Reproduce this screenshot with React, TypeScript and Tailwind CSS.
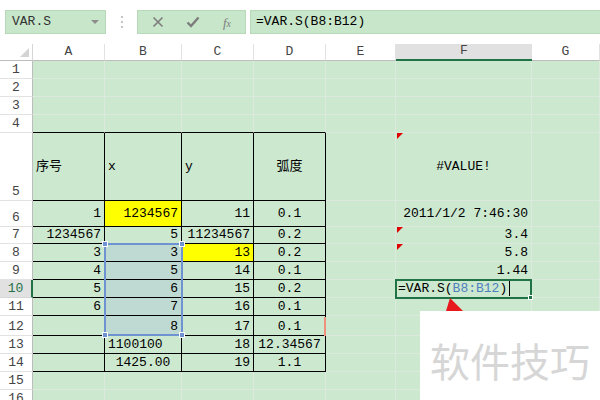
import type { ReactNode } from 'react'

type Align = 'l' | 'c' | 'r'
interface Cell {
  t: ReactNode
  a?: Align
  bg?: string
}

const COLS = ['A', 'B', 'C', 'D', 'E', 'F', 'G']
const ROWS = Array.from({ length: 16 }, (_, i) => i + 1)

const yellow = 'bg-[#ffff00]'
const sel = 'bg-[#bfdad2]'

const DATA: Record<string, Cell> = {
  A5: { t: '序号', a: 'l' },
  B5: { t: 'x', a: 'l' },
  C5: { t: 'y', a: 'l' },
  D5: { t: '弧度', a: 'c' },
  F5: { t: '#VALUE!', a: 'c' },
  A6: { t: '1' },
  B6: { t: '1234567', bg: yellow },
  C6: { t: '11' },
  D6: { t: '0.1', a: 'c' },
  F6: { t: '2011/1/2 7:46:30' },
  A7: { t: '1234567' },
  B7: { t: '5' },
  C7: { t: '11234567' },
  D7: { t: '0.2', a: 'c' },
  F7: { t: '3.4' },
  A8: { t: '3' },
  B8: { t: '3', bg: sel },
  C8: { t: '13', bg: yellow },
  D8: { t: '0.2', a: 'c' },
  F8: { t: '5.8' },
  A9: { t: '4' },
  B9: { t: '5', bg: sel },
  C9: { t: '14' },
  D9: { t: '0.1', a: 'c' },
  F9: { t: '1.44' },
  A10: { t: '5' },
  B10: { t: '6', bg: sel },
  C10: { t: '15' },
  D10: { t: '0.2', a: 'c' },
  A11: { t: '6' },
  B11: { t: '7', bg: sel },
  C11: { t: '16' },
  D11: { t: '0.1', a: 'c' },
  B12: { t: '8', bg: sel },
  C12: { t: '17' },
  D12: { t: '0.1', a: 'c' },
  B13: { t: '1100100', a: 'l' },
  C13: { t: '18' },
  D13: { t: '12.34567', a: 'c' },
  B14: { t: '1425.00', a: 'c' },
  C14: { t: '19' },
  D14: { t: '1.1', a: 'c' },
}

const alignCls = { l: 'justify-start', c: 'justify-center', r: 'justify-end' }

// SimSun-like look: monospace latin, CJK fallback
const mono = "[font-family:'Liberation_Mono','Noto_Sans_CJK_SC',monospace]"

const GridCell = ({ r, ci }: { r: number; ci: number }) => {
  const col = COLS[ci]
  const cell = DATA[`${col}${r}`]
  const inTable = ci <= 3
  const rightBlack = inTable && r >= 5 && r <= 14
  const bottomBlack = inTable && r >= 4 && r <= 14
  const vCenter = r === 5 || r === 6
  return (
    <div
      className={`flex overflow-visible whitespace-nowrap border-r border-b px-[3px] text-[13px] leading-[15px] text-black ${
        rightBlack ? 'border-r-black' : 'border-r-[#dbeadc]'
      } ${bottomBlack ? 'border-b-black' : 'border-b-[#dbeadc]'} ${vCenter ? 'items-center' : 'items-end pb-[1px]'} ${
        cell ? alignCls[cell.a ?? 'r'] : ''
      } ${cell?.bg ?? 'bg-[#cce8cf]'}`}
    >
      {cell?.t}
    </div>
  )
}

const CommentMark = ({ top }: { top: string }) => (
  <div className={`absolute left-[397px] ${top} h-0 w-0 border-t-[6px] border-r-[6px] border-t-[#e00000] border-r-transparent`} />
)

export default function App() {
  return (
    <div className={`h-[400px] w-[600px] overflow-hidden bg-white ${mono}`}>
      {/* toolbar */}
      <div className="flex h-[44px] items-start pt-[10px]">
        <div className="ml-[5px] flex h-[24px] w-[101px] items-center justify-between border border-[#b7d8b9] bg-[#c8e6c9] pl-[6px] pr-[6px] text-[13px] text-[#333]">
          <span>VAR.S</span>
          <svg width="8" height="5" viewBox="0 0 8 5">
            <path d="M0 0h8L4 4z" fill="#8c8c8c" />
          </svg>
        </div>
        <div className="flex h-[24px] w-[31px] flex-col items-center justify-center gap-[3px]">
          <span className="h-[2px] w-[2px] bg-[#c4c4c4]" />
          <span className="h-[2px] w-[2px] bg-[#c4c4c4]" />
          <span className="h-[2px] w-[2px] bg-[#c4c4c4]" />
        </div>
        <div className="flex h-[24px] w-[109px] items-center justify-between border border-[#b7d8b9] bg-[#c8e6c9] px-[14px]">
          <svg width="12" height="12" viewBox="0 0 12 12">
            <path d="M1.5 1.5l9 9M10.5 1.5l-9 9" stroke="#7d7d7d" strokeWidth="1.6" />
          </svg>
          <svg width="14" height="12" viewBox="0 0 14 12">
            <path d="M1.5 6.5l3.5 3.5 7.5-8.5" stroke="#7d7d7d" strokeWidth="2.4" fill="none" />
          </svg>
          <span className="font-['Liberation_Serif',serif] text-[13px] italic leading-none text-[#7d7d7d]">
            f<span className="text-[10px]">x</span>
          </span>
        </div>
        <div className="ml-[4px] flex h-[24px] flex-1 items-center border border-r-0 border-[#b7d8b9] bg-[#c8e6c9] pl-[5px] text-[13px] text-black">
          =VAR.S(B8:B12)
        </div>
      </div>

      {/* sheet */}
      <div className="relative">
        <div className="grid grid-cols-[33px_72px_77px_72px_72px_70px_136px_1fr] grid-rows-[17px_18px_18px_18px_18px_68px_26px_17px_18px_18px_18px_18px_20px_18px_18px_18px_18px]">
          <div className="relative border-r border-b border-r-[#d6d6d6] border-b-[#bdbdbd] bg-white">
            <div className="absolute right-[3px] bottom-[3px] h-0 w-0 border-b-[9px] border-l-[9px] border-b-[#d4d4d4] border-l-transparent" />
          </div>
          {COLS.map((c) => (
            <div
              key={c}
              className={`flex items-end justify-center pb-[1px] text-[13px] leading-[15px] text-[#444] ${
                c === 'F'
                  ? 'border-b-2 border-b-[#217346] bg-[#e1e1e1]'
                  : 'border-r border-b border-r-[#e2e2e2] border-b-[#bdbdbd] bg-white'
              }`}
            >
              {c}
            </div>
          ))}
          {ROWS.map((r) => (
            <div key={r} className="contents">
              <div
                className={`flex items-end justify-center pb-[1px] text-[13px] leading-[15px] ${
                  r === 10
                    ? 'border-r-2 border-b border-r-[#217346] border-b-[#d6d6d6] bg-[#e1e1e1] text-[#217346]'
                    : 'border-r border-b border-r-[#bdbdbd] border-b-[#e2e2e2] bg-white text-[#444]'
                }`}
              >
                {r}
              </div>
              {COLS.map((_, ci) => (
                <GridCell key={ci} r={r} ci={ci} />
              ))}
            </div>
          ))}
        </div>

        {/* comment markers */}
        <CommentMark top="top-[89px]" />
        <CommentMark top="top-[183px]" />
        <CommentMark top="top-[200px]" />

        {/* red edge mark */}
        <div className="absolute left-[324px] top-[273px] h-[19px] w-[2px] bg-[#f0907e]" />

        {/* selection B8:B12 */}
        <div className="absolute left-[104px] top-[199px] h-[93px] w-[79px] border-2 border-[#6f93d0]">
          <span className="absolute -left-[4px] -top-[4px] h-[6px] w-[6px] border border-white bg-[#6f93d0]" />
          <span className="absolute -right-[4px] -top-[4px] h-[6px] w-[6px] border border-white bg-[#6f93d0]" />
          <span className="absolute -left-[4px] -bottom-[4px] h-[6px] w-[6px] border border-white bg-[#6f93d0]" />
          <span className="absolute -right-[4px] -bottom-[4px] h-[6px] w-[6px] border border-white bg-[#6f93d0]" />
        </div>

        {/* active cell F10 */}
        <div className="absolute left-[395px] top-[235px] flex h-[20px] w-[137px] items-end border-2 border-[#217346] bg-[#cce8cf] pb-[1px] pl-[1px] text-[13px] leading-[15px] text-black">
          <span>=VAR.S(</span>
          <span className="text-[#4f81bd]">B8:B12</span>
          <span>)</span>
          <span className="ml-[2px] h-[15px] w-px bg-black" />
          <span className="absolute -right-[3px] -bottom-[3px] h-[5px] w-[5px] border border-white bg-[#217346]" />
        </div>

        {/* red pointer */}
        <svg className="absolute left-[446px] top-[254px]" width="18" height="14" viewBox="0 0 18 14">
          <path d="M4 0L17 13H0z" fill="#e8191d" />
        </svg>

        {/* watermark */}
        <div className="absolute left-[420px] top-[267px] flex h-[89px] w-[180px] items-center justify-center bg-white pt-[8px]">
          <span className="font-['Noto_Sans_CJK_SC',sans-serif] text-[40px] leading-none text-[#d6d6d6]">软件技巧</span>
        </div>
      </div>
    </div>
  )
}
